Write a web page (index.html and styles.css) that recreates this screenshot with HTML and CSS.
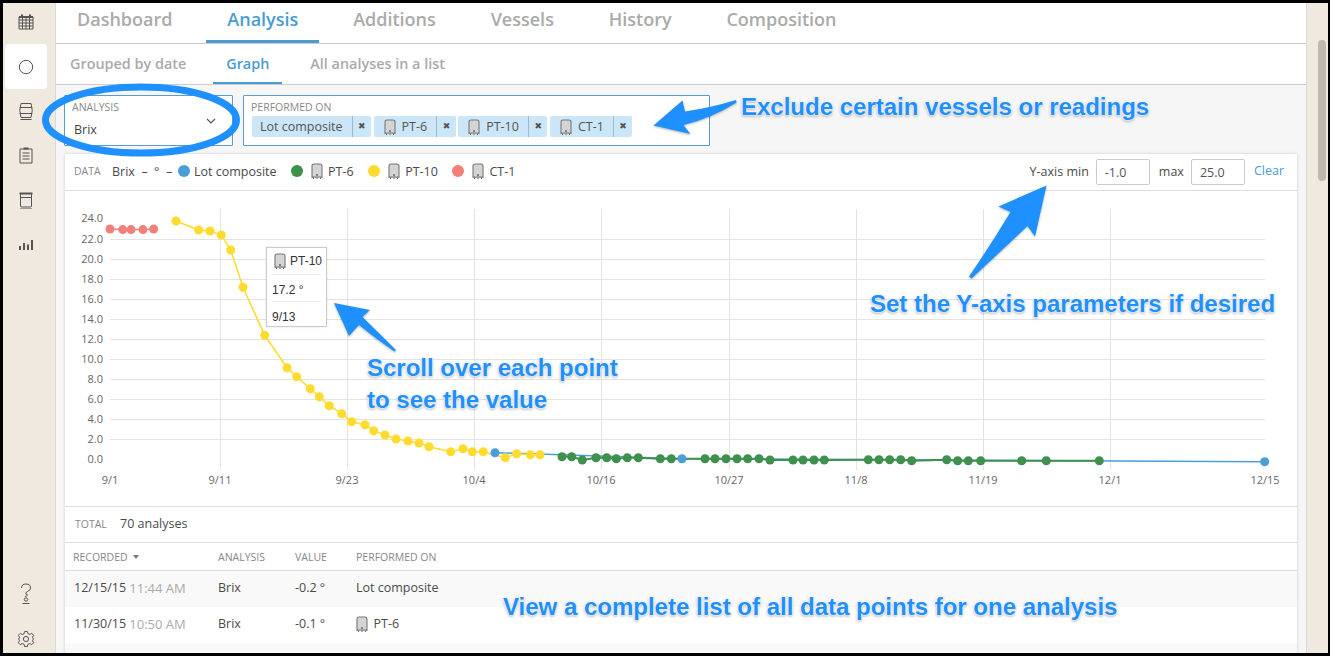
FILE: index.html
```html
<!DOCTYPE html>
<html lang="en">
<head>
<meta charset="utf-8">
<title>Analysis</title>
<link rel="stylesheet" href="styles.css">
</head>
<body>
<svg class="defs" width="0" height="0" aria-hidden="true">
  <symbol id="tank" viewBox="0 0 12 16">
    <path d="M1 15V3.2Q1 1 3 1H9Q11 1 11 3.2V15" fill="#d4d4d4" stroke="#777" stroke-width="1.1"/>
    <path d="M1 14H11" stroke="#777" stroke-width="1"/>
    <circle cx="6" cy="12" r="1" fill="#666"/>
    <path d="M2.5 16V14.5M6 16V14.5M9.5 16V14.5" stroke="#666" stroke-width="1"/>
  </symbol>
</svg>
<div class="frame">
  <aside class="side">
    <div class="side-top">
      <a class="side-item"><svg class="ico" viewBox="0 0 18 18"><path d="M2 4H16V16H2ZM2 7H16M2 10H16M2 13H16M5.5 4V16M9 4V16M12.5 4V16"/><path class="heavy" d="M5 1.5V4M13 1.5V4M2 4H16"/></svg></a>
      <a class="side-item active"><svg class="ico" viewBox="0 0 18 18"><circle cx="9" cy="9" r="6.7"/></svg></a>
      <a class="side-item"><svg class="ico" viewBox="0 0 18 18"><path d="M4 1.500H14Q16.500 8.500 14 15.500H4Q1.500 8.500 4 1.500ZM2.700 5.500H15.300M2.700 11.500H15.300M3.500 17.500H14.500"/></svg></a>
      <a class="side-item"><svg class="ico" viewBox="0 0 18 18"><path d="M3 3H15V17H3ZM5.500 7H12.500M5.500 10H12.500M5.500 13H12.500"/><path class="heavy" d="M6.500 2.500H11.500"/></svg></a>
      <a class="side-item"><svg class="ico" viewBox="0 0 18 18"><path class="heavy" d="M2.500 2.500H15.500"/><path d="M3.500 3V15Q3.500 16 5 16H13Q14.500 16 14.500 15V3M3.500 6.500H14.500M3 18H15"/></svg></a>
      <a class="side-item"><svg class="ico" viewBox="0 0 18 18"><path class="heavy" d="M3 15V11M7 15V8M11 15V9.500M15 15V5"/></svg></a>
    </div>
    <div class="side-bottom">
      <a class="side-item"><svg class="ico ico-tall" viewBox="0 0 18 22"><path d="M4.500 5Q4.500 1 9 1Q13.500 1 13.500 5Q13.500 7.500 10.500 8.500Q8 9.500 9 11Q12.500 12 8 13.500"/><circle cx="9" cy="16.500" r="1.700"/><path d="M5.500 20.500H12.500"/></svg></a>
      <a class="side-item"><svg class="ico" viewBox="0 0 18 18"><circle cx="9" cy="9" r="2.600"/><path d="M7.600 1.500H10.400L10.900 3.700L12.800 4.500L14.700 3.300L16.700 5.300L15.500 7.200L16.300 9L15.500 10.800L16.700 12.700L14.700 14.700L12.800 13.500L10.900 14.300L10.400 16.500H7.600L7.100 14.300L5.200 13.500L3.300 14.700L1.300 12.700L2.500 10.800L1.700 9L2.500 7.200L1.300 5.300L3.300 3.300L5.200 4.500L7.100 3.700Z"/></svg></a>
    </div>
  </aside>

  <main class="main">
    <nav class="tabs">
      <a class="tab">Dashboard</a>
      <a class="tab active">Analysis</a>
      <a class="tab">Additions</a>
      <a class="tab">Vessels</a>
      <a class="tab">History</a>
      <a class="tab">Composition</a>
    </nav>
    <nav class="subtabs">
      <a class="subtab">Grouped by date</a>
      <a class="subtab active">Graph</a>
      <a class="subtab">All analyses in a list</a>
    </nav>
    <section class="filters">
      <div class="field field-analysis">
        <span class="label">ANALYSIS</span>
        <div class="select-row"><span>Brix</span>
          <svg class="chev" viewBox="0 0 10 6"><path d="M1 1L5 5L9 1"/></svg></div>
      </div>
      <div class="field field-performed">
        <span class="label">PERFORMED ON</span>
        <div class="chips">
          <span class="chip"><span class="chip-text chip-lot">Lot composite</span><span class="chip-x">✖</span></span>
          <span class="chip"><span class="chip-text"><svg class="tank"><use href="#tank"/></svg>PT-6</span><span class="chip-x">✖</span></span>
          <span class="chip"><span class="chip-text"><svg class="tank"><use href="#tank"/></svg>PT-10</span><span class="chip-x">✖</span></span>
          <span class="chip"><span class="chip-text"><svg class="tank"><use href="#tank"/></svg>CT-1</span><span class="chip-x">✖</span></span>
        </div>
      </div>
    </section>

    <section class="card">
      <header class="card-head">
        <span class="label data-label">DATA</span>
        <span class="data-name">Brix &nbsp;–&nbsp; ° &nbsp;–</span>
        <span class="legend"><i class="dot blue"></i>Lot composite</span>
        <span class="legend"><i class="dot green"></i><svg class="tank"><use href="#tank"/></svg>PT-6</span>
        <span class="legend"><i class="dot yellow"></i><svg class="tank"><use href="#tank"/></svg>PT-10</span>
        <span class="legend"><i class="dot red"></i><svg class="tank"><use href="#tank"/></svg>CT-1</span>
        <span class="axis-controls">
          <span class="axis-text">Y-axis min</span><span class="num-input">-1.0</span>
          <span class="axis-text max-label">max</span><span class="num-input">25.0</span>
          <a class="clear">Clear</a>
        </span>
      </header>

      <div class="chart">
        <svg class="plot" viewBox="65 191 1232 315" width="1232" height="315">
          <g class="grid">
            <path d="M110 239.500H1265M110 259.500H1265M110 279.500H1265M110 299.500H1265M110 319.500H1265M110 339.500H1265M110 359.500H1265M110 379.500H1265M110 399.500H1265M110 419.500H1265M110 439.500H1265"/>
            <path d="M220.500 209V470M347.500 209V470M474.500 209V470M601.500 209V470M729.500 209V470M856.500 209V470M983.500 209V470M1110.500 209V470"/>
          </g>
          <g class="ylab">
            <text x="103" y="222">24.0</text><text x="103" y="243">22.0</text><text x="103" y="263">20.0</text><text x="103" y="283">18.0</text><text x="103" y="303">16.0</text><text x="103" y="323">14.0</text><text x="103" y="343">12.0</text><text x="103" y="363">10.0</text><text x="103" y="383">8.0</text><text x="103" y="403">6.0</text><text x="103" y="423">4.0</text><text x="103" y="443">2.0</text><text x="103" y="463">0.0</text>
          </g>
          <g class="xlab">
            <text x="110" y="484">9/1</text><text x="220" y="484">9/11</text><text x="347" y="484">9/23</text><text x="474" y="484">10/4</text><text x="601" y="484">10/16</text><text x="729" y="484">10/27</text><text x="856" y="484">11/8</text><text x="983" y="484">11/19</text><text x="1110" y="484">12/1</text><text x="1265" y="484">12/15</text>
          </g>
          <polyline class="line line-blue" points="495,452.700 682,458.700 1265,461.700"/>
          <polyline class="line line-red" points="110,229 122.700,229.600 131,229.600 143,229.600 153.700,229"/>
          <polyline class="line line-yellow" points="176,221 198.700,230 210,231 221.300,235 230.700,250 243,287.300 264.700,335.300 287,367.700 296.700,376.700 310.300,388.700 319.300,396.700 329.300,405.700 341.700,413.700 351.700,421.700 365,424.700 373.700,430.700 385,435 396,439 408,441 419,443 429,446.700 450.700,451.700 463,448.700 472.300,451.700 483.300,451.700 505.300,457.700 516.700,453.700 530.300,454.700 540,454.700"/>
          <polyline class="line line-green" points="562,456.700 571.700,456.700 582.300,460 596,457.700 606.700,457.700 616.300,458.700 627.300,457.700 638.300,457.700 660.300,458.700 671.300,458.700 705,458.700 715,458.700 726,458.700 737,458.700 747.700,458.700 759,458.700 770,460 793,460 803,460 814,460 824.300,460 868.300,459.700 879,459.700 889.700,459.700 900.700,459.700 911.700,460.700 946.700,459.700 957.700,460.700 968.300,460.700 980.700,460.700 1021.700,460.700 1046.300,460.700 1099.300,460.700"/>
          <g class="pts pts-red">
            <circle cx="110" cy="229"/><circle cx="122.700" cy="229.600"/><circle cx="131" cy="229.600"/><circle cx="143" cy="229.600"/><circle cx="153.700" cy="229"/>
          </g>
          <g class="pts pts-yellow">
            <circle cx="176" cy="221"/><circle cx="198.700" cy="230"/><circle cx="210" cy="231"/><circle cx="221.300" cy="235"/><circle cx="230.700" cy="250"/><circle cx="243" cy="287.300"/><circle cx="264.700" cy="335.300"/><circle cx="287" cy="367.700"/><circle cx="296.700" cy="376.700"/><circle cx="310.300" cy="388.700"/><circle cx="319.300" cy="396.700"/><circle cx="329.300" cy="405.700"/><circle cx="341.700" cy="413.700"/><circle cx="351.700" cy="421.700"/><circle cx="365" cy="424.700"/><circle cx="373.700" cy="430.700"/><circle cx="385" cy="435"/><circle cx="396" cy="439"/><circle cx="408" cy="441"/><circle cx="419" cy="443"/><circle cx="429" cy="446.700"/><circle cx="450.700" cy="451.700"/><circle cx="463" cy="448.700"/><circle cx="472.300" cy="451.700"/><circle cx="483.300" cy="451.700"/><circle cx="505.300" cy="457.700"/><circle cx="516.700" cy="453.700"/><circle cx="530.300" cy="454.700"/><circle cx="540" cy="454.700"/>
          </g>
          <g class="pts pts-blue">
            <circle cx="495" cy="452.700"/><circle cx="682" cy="458.700"/><circle cx="1264.700" cy="461.700"/>
          </g>
          <g class="pts pts-green">
            <circle cx="562" cy="456.700"/><circle cx="571.700" cy="456.700"/><circle cx="582.300" cy="460"/><circle cx="596" cy="457.700"/><circle cx="606.700" cy="457.700"/><circle cx="616.300" cy="458.700"/><circle cx="627.300" cy="457.700"/><circle cx="638.300" cy="457.700"/><circle cx="660.300" cy="458.700"/><circle cx="671.300" cy="458.700"/><circle cx="705" cy="458.700"/><circle cx="715" cy="458.700"/><circle cx="726" cy="458.700"/><circle cx="737" cy="458.700"/><circle cx="747.700" cy="458.700"/><circle cx="759" cy="458.700"/><circle cx="770" cy="460"/><circle cx="793" cy="460"/><circle cx="803" cy="460"/><circle cx="814" cy="460"/><circle cx="824.300" cy="460"/><circle cx="868.300" cy="459.700"/><circle cx="879" cy="459.700"/><circle cx="889.700" cy="459.700"/><circle cx="900.700" cy="459.700"/><circle cx="911.700" cy="460.700"/><circle cx="946.700" cy="459.700"/><circle cx="957.700" cy="460.700"/><circle cx="968.300" cy="460.700"/><circle cx="980.700" cy="460.700"/><circle cx="1021.700" cy="460.700"/><circle cx="1046.300" cy="460.700"/><circle cx="1099.300" cy="460.700"/>
          </g>
        </svg>
        <div class="tooltip">
          <div class="tip-row tip-name"><svg class="tank"><use href="#tank"/></svg>PT-10</div>
          <div class="tip-row">17.2 °</div>
          <div class="tip-row">9/13</div>
        </div>
      </div>

      <div class="total"><span class="label total-label">TOTAL</span><span>70 analyses</span></div>

      <div class="row row-head">
        <span class="label">RECORDED <i class="caret"></i></span>
        <span class="label">ANALYSIS</span>
        <span class="label">VALUE</span>
        <span class="label">PERFORMED ON</span>
      </div>
      <div class="row row-data shade">
        <span>12/15/15 <em>11:44 AM</em></span><span>Brix</span><span>-0.2 °</span><span>Lot composite</span>
      </div>
      <div class="row row-data">
        <span>11/30/15 <em>10:50 AM</em></span><span>Brix</span><span>-0.1 °</span><span><svg class="tank"><use href="#tank"/></svg>PT-6</span>
      </div>
      <div class="row row-data shade"></div>
    </section>
  </main>

  <div class="scrollbar"><div class="thumb"></div></div>

  <svg class="overlay" viewBox="0 0 1330 656" width="1330" height="656" aria-hidden="true">
    <ellipse class="ring" cx="141" cy="120" rx="95.500" ry="33"/>
    <path class="arrow" d="M334 303L370 310L362.500 317Q380 334 396 350L394.500 351.500Q375 338 359 325L349 336Z"/>
    <path class="arrow" d="M653.500 125.500L682.500 100.500L685 111.500Q710 108 736 100L736.500 102.500Q712 118 683.500 125L690.500 134Z"/>
    <path class="arrow" d="M1046.500 185.500L1035 236.500L1027.500 226Q1000 252 971.500 278.500L969 276.500Q992 243 1010.500 212L998.500 206.500Z"/>
  </svg>
  <p class="note note-exclude">Exclude certain vessels or readings</p>
  <p class="note note-scroll">Scroll over each point<br>to see the value</p>
  <p class="note note-yaxis">Set the Y-axis parameters if desired</p>
  <p class="note note-list">View a complete list of all data points for one analysis</p>
</div>
</body>
</html>
```

FILE: styles.css
```css
* { box-sizing: border-box; }
html, body { margin: 0; padding: 0; }
body { font-family: "Open Sans", sans-serif; font-size: 12.500px; color: #4a4a4a; background: #000; overflow: hidden; }
.defs { position: absolute; }
.frame {
  position: relative;
  width: 1330px;
  height: 656px;
  display: flex;
  overflow: hidden;
  border-style: solid;
  border-color: #000;
  border-width: 3px 2px 3px 3px;
  background: #fff;
}
.overlay { position: absolute; left: -3px; top: -3px; pointer-events: none; }

/* sidebar */
.side {
  flex: 0 0 53px;
  background: #efe9df;
  border-right: 1px solid #ded9d0;
  display: flex;
  flex-direction: column;
  justify-content: space-between;
  padding: 0 0 0 2px;
}
.side-top { margin-top: -3px; }
.side-item {
  display: flex;
  align-items: center;
  justify-content: center;
  width: 42px;
  height: 44.400px;
  border-radius: 4px 0 0 4px;
  padding-right: 1px;
}
.side-item.active { background: #fff; border-radius: 4px; }
.side-bottom { margin-bottom: -8px; }
.side-bottom .side-item { height: 45px; }
.ico { width: 18px; height: 18px; fill: none; stroke: #555; stroke-width: 1; }
.ico-tall { height: 22px; }
.ico .heavy { stroke-width: 2; }

/* tabs */
.main { flex: 1 1 auto; min-width: 0; display: flex; flex-direction: column; background: #f6f6f6; overflow: hidden; }
.tabs, .subtabs { background: #fff; display: flex; flex: none; }
.tabs { height: 41px; border-bottom: 1px solid #ccc; gap: 12.850px; }
.tab {
  position: relative;
  height: 40px;
  padding: 4px 21px 0;
  font-size: 18px;
  line-height: 25px;
  font-weight: 600;
  color: #aaa;
}
.tab.active { color: #4a9bd4; border-bottom: 3px solid #4a9bd4; }
.subtabs { height: 41px; border-bottom: 1px solid #ccc; gap: 14px; padding-left: 1px; }
.subtab {
  height: 40px;
  padding: 10px 13px 0;
  font-size: 14.400px;
  line-height: 20px;
  font-weight: 600;
  color: #aaa;
}
.subtab:last-child { margin-left: 1px; }
.subtab.active { color: #4a9bd4; border-bottom: 2px solid #4a9bd4; }

/* filters */
.filters { flex: none; height: 69px; padding: 10px 0 0 8px; display: flex; gap: 10px; }
.field {
  height: 51px;
  background: #fff;
  border: 1px solid #5a9bd0;
  border-radius: 1px;
  padding: 4px 0 0 7px;
}
.field-analysis { width: 169px; }
.field-performed { width: 467px; }
.label { display: block; font-size: 10.500px; line-height: 14px; color: #888; font-weight: 400; }
.select-row { display: flex; justify-content: space-between; align-items: center; padding: 7px 16px 0 2px; line-height: 18px; color: #444; }
.chev { width: 10px; height: 6px; fill: none; stroke: #555; stroke-width: 1.200; margin-top: -18px; }
.chips { display: flex; gap: 2.500px; margin-top: 2px; margin-left: 1px; }
.chip { display: flex; height: 21px; background: #cae6f8; border-radius: 2px; line-height: 21px; color: #555; }
.chip-text { display: flex; align-items: center; padding: 0 9px 0 8px; border-right: 1px solid #9db9cc; white-space: nowrap; }
.chip-x { width: 18.500px; text-align: center; font-size: 9px; color: #555; font-family: "DejaVu Sans", sans-serif; }
.tank { width: 12px; height: 16px; flex: none; margin-right: 5.500px; vertical-align: -4px; }
.chip .tank { margin-left: 2px; margin-right: 6px; }

/* card */
.card { flex: 1 1 auto; margin: 0 9px; background: #fff; box-shadow: 0 0 3px rgba(0, 0, 0, .18); }
.card-head {
  height: 37px;
  border-bottom: 1px solid #ddd;
  display: flex;
  align-items: center;
  padding: 0 13px 0 9px;
}
.data-label { width: 38px; margin-bottom: 2px; }
.data-name { width: 66px; white-space: nowrap; margin-bottom: 2px; }
.legend { display: flex; align-items: center; margin: 0 14px 2px 0; white-space: nowrap; }
.dot { display: block; width: 12px; height: 12px; border-radius: 50%; margin-right: 4px; }
.legend .dot + .tank { margin-left: 4px; }
.dot.blue { background: #4a9fd8; }
.dot.green { background: #3f8f4d; }
.dot.yellow { background: #fedb2e; }
.dot.red { background: #f08078; }
.axis-controls { margin-left: auto; display: flex; align-items: center; gap: 7px; }
.axis-text { margin-bottom: 2px; }
.num-input {
  display: block;
  width: 54px;
  height: 26px;
  border: 1px solid #ccc;
  border-radius: 2px;
  padding-left: 8px;
  line-height: 26px;
  color: #555;
}
.max-label { margin-left: 2px; }
.clear { color: #4a9bd4; margin: 0 0 3px 2px; }

/* chart */
.chart { position: relative; height: 316px; border-bottom: 1px solid #ddd; }
.plot { display: block; }
.grid path { stroke: #e3e3e3; stroke-width: 1; fill: none; }
.ylab text, .xlab text { font-family: "Open Sans", sans-serif; font-size: 11px; fill: #666; }
.ylab text { text-anchor: end; }
.xlab text { text-anchor: middle; }
.line { fill: none; stroke-width: 1.500; }
.line-blue { stroke: #4a9fd8; }
.line-red { stroke: #f08078; }
.line-yellow { stroke: #fedb2e; }
.line-green { stroke: #3f8f4d; stroke-width: 2; }
.pts circle { r: 4.500px; }
.pts-red { fill: #f08078; }
.pts-yellow { fill: #fedb2e; }
.pts-blue { fill: #4a9fd8; }
.pts-green { fill: #3f8f4d; }
.tooltip {
  position: absolute;
  left: 201px;
  top: 56px;
  width: 61px;
  height: 80px;
  background: #fff;
  border: 1px solid #ccc;
  box-shadow: 0 0 2px rgba(0, 0, 0, .12);
  padding: 0 5px;
  font-family: "Liberation Sans", sans-serif;
  font-size: 12px;
  color: #333;
}
.tip-row { height: 27px; line-height: 27px; padding: 2px 0 0; border-bottom: 1px solid #eee; white-space: nowrap; }
.tip-row:last-child { border-bottom: 0; }
.tip-name { display: flex; align-items: center; padding: 0 0 0 2px; }
.tip-name .tank { margin-right: 4px; }

/* table */
.total { height: 36px; border-bottom: 1px solid #ddd; display: flex; align-items: center; padding: 0 0 2px 10px; }
.total-label { width: 45px; }
.row { display: grid; grid-template-columns: 145px 77px 61px 1fr; padding-left: 8px; align-items: center; }
.row-head { height: 28px; border-bottom: 1px solid #ddd; }
.row-data { height: 36px; padding: 0 0 3px 9px; grid-template-columns: 144px 77px 61px 1fr; }
.row-data span { display: flex; align-items: center; white-space: pre; }
.row-data em { font-style: normal; color: #aaa; font-size: 13px; }
.shade { background: #f9f9f9; }
.caret { display: inline-block; border: 3.500px solid transparent; border-top: 4px solid #777; border-bottom: 0; margin-left: 3px; vertical-align: 2px; }

/* scrollbar */
.scrollbar { flex: 0 0 22px; background: #efe9df; border-left: 1px solid #ded9d0; position: relative; }
.thumb { position: absolute; left: 11px; top: 37px; width: 8px; height: 141px; border-radius: 4px; background: #bdb9ae; }

/* annotations */
.ring { fill: none; stroke: #1e90ff; stroke-width: 7; }
.arrow { fill: #1e90ff; filter: drop-shadow(0 1px 1px rgba(0, 0, 0, .3)); }
.note {
  position: absolute;
  margin: 0;
  font-family: "Liberation Sans", sans-serif;
  font-weight: 700;
  font-size: 24px;
  line-height: 32px;
  color: #1e90ff;
  white-space: nowrap;
  text-shadow: 0 0 2px #fff, 0 0 2px #fff, 0 0 3px #fff, 0 1px 3px rgba(0, 0, 0, .55);
}
.note-exclude { left: 738px; top: 88px; }
.note-scroll { left: 364px; top: 349px; }
.note-yaxis { left: 867px; top: 285px; }
.note-list { left: 500px; top: 588px; }
```
